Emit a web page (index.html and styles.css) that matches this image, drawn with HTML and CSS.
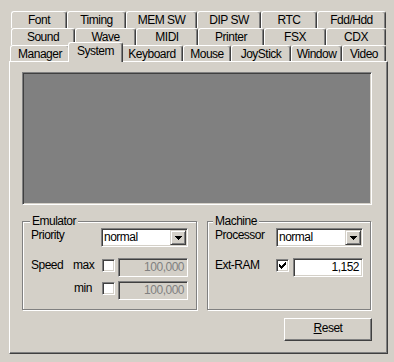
FILE: index.html
```html
<!DOCTYPE html>
<html>
<head>
<meta charset="utf-8">
<title>System</title>
<link rel="stylesheet" href="styles.css">
</head>
<body>
<div class="dialog">
  <div class="tabrow">
    <div class="tab w56">Font</div>
    <div class="tab w59">Timing</div>
    <div class="tab w71">MEM SW</div>
    <div class="tab w64">DIP SW</div>
    <div class="tab w56">RTC</div>
    <div class="tab w69">Fdd/Hdd</div>
  </div>
  <div class="tabrow">
    <div class="tab w64">Sound</div>
    <div class="tab w61">Wave</div>
    <div class="tab w62">MIDI</div>
    <div class="tab w66">Printer</div>
    <div class="tab w62">FSX</div>
    <div class="tab w60">CDX</div>
  </div>
  <div class="tabrow front">
    <div class="tab w60">Manager</div>
    <div class="tab w51 active">System</div>
    <div class="tab w62">Keyboard</div>
    <div class="tab w48">Mouse</div>
    <div class="tab w60">JoyStick</div>
    <div class="tab w51">Window</div>
    <div class="tab w44">Video</div>
  </div>
  <div class="panel">
    <div class="screen"></div>
    <div class="groups">
      <div class="group emu">
        <div class="gtitle">Emulator</div>
        <div class="frow">
          <span class="lbl c70">Priority</span>
          <div class="select">
            <span class="val">normal</span>
            <span class="arrow"><svg width="7" height="4" viewBox="0 0 7 4" shape-rendering="crispEdges"><path d="M0 0h7v1h-1v1h-1v1h-1v1h-1v-1h-1v-1h-1v-1h-1z" fill="#000"/></svg></span>
          </div>
        </div>
        <div class="frow gap11">
          <span class="lbl c42 up">Speed</span>
          <span class="lbl c28 up">max</span>
          <span class="check chk-e"></span>
          <span class="edit disabled">100,000</span>
        </div>
        <div class="frow gap4">
          <span class="lbl c42"></span>
          <span class="lbl c28 up sub">min</span>
          <span class="check chk-e"></span>
          <span class="edit disabled">100,000</span>
        </div>
      </div>
      <div class="group mach">
        <div class="gtitle">Machine</div>
        <div class="frow">
          <span class="lbl c61">Processor</span>
          <div class="select">
            <span class="val">normal</span>
            <span class="arrow"><svg width="7" height="4" viewBox="0 0 7 4" shape-rendering="crispEdges"><path d="M0 0h7v1h-1v1h-1v1h-1v1h-1v-1h-1v-1h-1v-1h-1z" fill="#000"/></svg></span>
          </div>
        </div>
        <div class="frow gap11">
          <span class="lbl c61 up">Ext-RAM</span>
          <span class="check"><svg width="7" height="7" viewBox="0 0 7 7" shape-rendering="crispEdges"><path d="M0 2h1v3h-1z M1 3h1v3h-1z M2 4h1v3h-1z M3 3h1v3h-1z M4 2h1v3h-1z M5 1h1v3h-1z M6 0h1v3h-1z" fill="#000"/></svg></span>
          <span class="edit ram">1,152</span>
        </div>
      </div>
    </div>
    <div class="btnrow">
      <div class="btn"><span class="u">R</span>eset</div>
    </div>
  </div>
</div>
</body>
</html>
```
FILE: styles.css
```css
* { box-sizing: border-box; }
html, body { margin: 0; padding: 0; }
body {
  background: #d4d0c8;
  width: 394px;
  height: 362px;
  overflow: hidden;
  font-family: "Liberation Sans", Arial, sans-serif;
  font-size: 12px;
  letter-spacing: -0.5px;
  color: #000;
}
.dialog { padding-top: 11px; }

/* tabs */
.tabrow { display: flex; height: 17px; margin-left: 11px; }
.tabrow.front { height: 16px; margin-left: 10px; }
.tab {
  flex: none;
  height: 17px;
  border-top: 1px solid #fff;
  border-left: 1px solid #fff;
  border-right: 1px solid #404040;
  box-shadow: inset -1px 0 0 #808080;
  border-radius: 3px 3px 0 0;
  background: #d4d0c8;
  text-align: center;
  line-height: 14px;
  padding-top: 1px;
  white-space: nowrap;
}
.front .tab { height: 16px; }
.tab.active {
  position: relative;
  z-index: 2;
  margin: -3px -2px 0;
  height: 20px;
}
.w44 { width: 44px; }
.w48 { width: 48px; }
.w51 { width: 51px; }
.w56 { width: 56px; }
.w59 { width: 59px; }
.w60 { width: 60px; }
.w61 { width: 61px; }
.w62 { width: 62px; }
.w64 { width: 64px; }
.w66 { width: 66px; }
.w69 { width: 69px; }
.w71 { width: 71px; }
.tab.active.w51 { width: 55px; }

/* panel */
.panel {
  margin-left: 9px;
  width: 379px;
  height: 293px;
  border-top: 1px solid #fff;
  border-left: 1px solid #fff;
  border-right: 1px solid #404040;
  border-bottom: 1px solid #404040;
  box-shadow: inset -1px -1px 0 #808080;
  padding: 10px 15px 0 12px;
}
.screen {
  height: 133px;
  background: #808080;
  border: 1px solid;
  border-color: #808080 #fff #fff #808080;
  box-shadow: inset 1px 1px 0 #404040, inset -1px -1px 0 #d4d0c8;
}

/* groups */
.groups { display: flex; gap: 10px; margin-top: 16px; }
.group {
  height: 89px;
  border: 1px solid #808080;
  box-shadow: inset 1px 1px 0 #fff, 1px 1px 0 #fff;
}
.group.emu { width: 175px; padding-left: 8px; }
.group.mach { width: 164px; padding-left: 7px; }
.gtitle {
  width: max-content;
  margin: -8px 0 0 -1px;
  padding: 0 2px;
  line-height: 14px;
  height: 14px;
  background: #d4d0c8;
}
.mach .gtitle { margin-left: -2px; }

.frow { display: flex; height: 19px; align-items: flex-start; }
.gap11 { margin-top: 11px; }
.gap4 { margin-top: 4px; }
.lbl { flex: none; line-height: 14px; white-space: nowrap; }
.lbl.up { margin-top: 0; }
.lbl.sub { padding-left: 1px; }
.c28 { width: 28px; }
.c42 { width: 42px; }
.c61 { width: 61px; }
.c70 { width: 70px; }

/* controls */
.select {
  flex: none;
  display: flex;
  width: 87px;
  height: 19px;
  padding: 1px;
  background: #fff;
  border: 1px solid;
  border-color: #808080 #fff #fff #808080;
  box-shadow: inset 1px 1px 0 #404040, inset -1px -1px 0 #d4d0c8;
}
.select .val { flex: 1; line-height: 15px; padding-left: 1px; }
.select .arrow {
  width: 16px;
  height: 15px;
  display: flex;
  align-items: center;
  justify-content: center;
  background: #d4d0c8;
  border: 1px solid;
  border-color: #d4d0c8 #404040 #404040 #d4d0c8;
  box-shadow: inset 1px 1px 0 #fff, inset -1px -1px 0 #808080;
}
.select .arrow svg { display: block; }

.check {
  flex: none;
  width: 13px;
  height: 13px;
  margin-top: 1px;
  padding: 2px;
  background: #fff;
  border: 1px solid;
  border-color: #808080 #fff #fff #808080;
  box-shadow: inset 1px 1px 0 #404040, inset -1px -1px 0 #d4d0c8;
}
.check svg { display: block; }
.chk-e { margin-left: 1px; }

.edit {
  flex: none;
  width: 70px;
  height: 19px;
  margin-left: 3px;
  padding: 1px 3px 0 2px;
  line-height: 15px;
  text-align: right;
  background: #fff;
  border: 1px solid;
  border-color: #808080 #fff #fff #808080;
  box-shadow: inset 1px 1px 0 #404040, inset -1px -1px 0 #d4d0c8;
}
.edit.ram { margin-left: 4px; }
.edit.disabled { background: #d4d0c8; color: #808080; }

/* button */
.btnrow { display: flex; justify-content: flex-end; margin-top: 8px; }
.btn {
  width: 88px;
  height: 23px;
  text-align: center;
  line-height: 19px;
  border: 1px solid;
  border-color: #fff #404040 #404040 #fff;
  box-shadow: inset -1px -1px 0 #808080;
}
.u { text-decoration: underline; }
```
